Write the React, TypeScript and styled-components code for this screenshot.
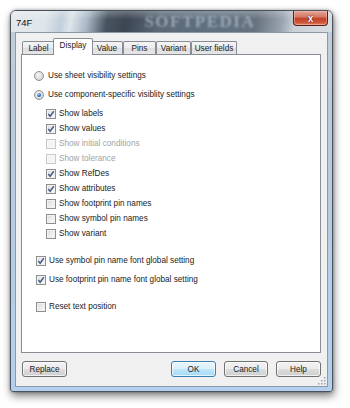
import React from "react";
import styled, { createGlobalStyle, css } from "styled-components";

const Global = createGlobalStyle`
  html, body { margin: 0; padding: 0; background: #ffffff; }
  body { font-family: "Liberation Sans", Arial, sans-serif; font-size: 8.2px; color: #1b1b1b; }
  * { box-sizing: border-box; }
`;

const Page = styled.div`
  width: 350px;
  height: 408px;
  padding: 10px 0 0 10px;
`;

const Window = styled.div`
  width: 323px;
  height: 382px;
  border: 1px solid #4a525c;
  border-radius: 6px 6px 3px 3px;
  background: linear-gradient(180deg, #c3ccd6 0%, #b7cbe0 40%, #b4d0ee 100%);
  box-shadow: 1px 4px 9px rgba(0, 0, 0, 0.5), 0 0 3px rgba(0, 0, 0, 0.35);
  display: flex;
  flex-direction: column;
  overflow: hidden;
`;

const TitleBar = styled.div`
  height: 21px;
  display: flex;
  align-items: center;
  padding-left: 5px;
  background:
    linear-gradient(180deg, rgba(255,255,255,0.25) 0%, rgba(255,255,255,0) 40%),
    linear-gradient(100deg, #e4e8ec 0%, #dfe5ea 11%, #c2cfdc 16%, #dde4ea 19%, #a9b8c7 24%, #48545f 30%, #3b4653 36%, #5b6876 46%, #607080 62%, #66737f 76%, #98a3ae 84%, #c9d0d6 88%, #d9dee3 100%);
`;

const Title = styled.span`
  font-size: 9.5px;
  color: #111;
  margin-top: 1px;
`;

const Watermark = styled.span`
  margin-left: 112px;
  font-family: "Liberation Serif", serif;
  font-weight: bold;
  font-size: 17px;
  letter-spacing: 1.5px;
  color: #a9b5c1;
  filter: blur(1.3px);
  opacity: 0.8;
`;

const CloseButton = styled.div`
  margin-left: auto;
  margin-right: 4px;
  align-self: flex-start;
  width: 35px;
  height: 15px;
  border: 1px solid #5a1f16;
  border-top: none;
  border-radius: 0 0 4px 4px;
  background: linear-gradient(180deg, #e5a598 0%, #d77a66 40%, #c4412a 55%, #cf5a3d 85%, #e1916f 100%);
  box-shadow: inset 0 0 0 1px rgba(255, 200, 190, 0.45);
  display: flex;
  align-items: center;
  justify-content: center;
  color: #fff;
  font-weight: bold;
  font-size: 10px;
  text-shadow: 0 0 1px #3a0f08, 0 0 1px #3a0f08;
`;

const Client = styled.div`
  position: relative;
  margin: 0 4px 4px 4px;
  height: 355px;
  background: #f0f0f0;
  border: 1px solid #8c99a6;
  padding: 5px 6px 0 5px;
  display: flex;
  flex-direction: column;
`;

const TabStrip = styled.div`
  display: flex;
  align-items: flex-start;
  height: 17px;
  margin-bottom: -1px;
  padding-left: 1px;
  position: relative;
  z-index: 1;
`;

const Tab = styled.div<{ $w: number; $active?: boolean }>`
  width: ${(p) => p.$w}px;
  display: flex;
  align-items: center;
  justify-content: center;
  border: 1px solid #898c95;
  border-bottom: none;
  border-radius: 2px 2px 0 0;
  white-space: nowrap;
  ${(p) =>
    p.$active
      ? css`
          height: 17px;
          margin: 0 -2px;
          background: #ffffff;
          position: relative;
          z-index: 2;
          padding-bottom: 3px;
        `
      : css`
          height: 13px;
          margin-top: 3px;
          background: linear-gradient(180deg, #f4f4f4 0%, #ebebeb 50%, #dedede 51%, #e6e6e6 100%);
        `}
`;

const Panel = styled.div`
  height: 299px;
  background: #ffffff;
  border: 1px solid #898c95;
  padding: 13px 0 0 12px;
  display: flex;
  flex-direction: column;
`;

const Row = styled.label<{ $indent?: number; $mt?: number; $disabled?: boolean }>`
  display: flex;
  align-items: center;
  gap: 3px;
  height: 15px;
  margin-left: ${(p) => p.$indent ?? 0}px;
  margin-top: ${(p) => p.$mt ?? 0}px;
  color: ${(p) => (p.$disabled ? "#a3a3a3" : "#1b1b1b")};
  white-space: nowrap;
`;

const RadioCircle = styled.span<{ $on?: boolean }>`
  width: 10px;
  height: 10px;
  border-radius: 50%;
  border: 1px solid #8d8d8d;
  background: radial-gradient(circle at 40% 35%, #f6f6f6 0%, #dcdcdc 60%, #cfcfcf 100%);
  display: flex;
  align-items: center;
  justify-content: center;
  margin-right: 1px;
  &::after {
    content: "";
    display: ${(p) => (p.$on ? "block" : "none")};
    width: 4px;
    height: 4px;
    border-radius: 50%;
    background: radial-gradient(circle at 35% 30%, #9fd0f7 0%, #2b74c5 55%, #164e99 100%);
  }
`;

const CheckBox = styled.span<{ $disabled?: boolean }>`
  width: 10px;
  height: 10px;
  border: 1px solid ${(p) => (p.$disabled ? "#c9c9c9" : "#8e8f8f")};
  background: ${(p) =>
    p.$disabled
      ? "#f4f4f4"
      : "linear-gradient(135deg, #d9d9d9 0%, #ececec 50%, #fbfbfb 100%)"};
  box-shadow: inset 0 0 0 1px ${(p) => (p.$disabled ? "#f7f7f7" : "#f2f2f2")};
  display: flex;
  align-items: center;
  justify-content: center;
`;

const Check = () => (
  <svg width="8" height="8" viewBox="0 0 8 8">
    <path d="M1.3 4.1 L3.1 6.2 L6.8 1.2" fill="none" stroke="#465c8a" strokeWidth="1.5" />
  </svg>
);

const Footer = styled.div`
  display: flex;
  align-items: center;
  margin-top: 8px;
  padding-left: 1px;
`;

const ButtonGroup = styled.div`
  margin-left: auto;
  display: flex;
  gap: 8px;
`;

const Button = styled.div<{ $w: number; $default?: boolean }>`
  width: ${(p) => p.$w}px;
  height: 16px;
  border: 1px solid ${(p) => (p.$default ? "#3c7fb1" : "#707070")};
  border-radius: 3px;
  background: ${(p) =>
    p.$default
      ? "linear-gradient(180deg, #eaf6fd 0%, #d9f0fc 50%, #bee6fd 51%, #a7d9f5 100%)"
      : "linear-gradient(180deg, #f2f2f2 0%, #ebebeb 50%, #dddddd 51%, #cfcfcf 100%)"};
  box-shadow: inset 0 0 0 1px rgba(255, 255, 255, 0.7);
  display: flex;
  align-items: center;
  justify-content: center;
`;

const Grip = styled.svg`
  position: absolute;
  right: 1px;
  bottom: 1px;
`;

type Opt = {
  text: string;
  kind: "radio" | "check";
  on?: boolean;
  disabled?: boolean;
  indent?: number;
  mt?: number;
};

const options: Opt[] = [
  { text: "Use sheet visibility settings", kind: "radio" },
  { text: "Use component-specific visiblity settings", kind: "radio", on: true, mt: 4 },
  { text: "Show labels", kind: "check", on: true, indent: 12, mt: 4 },
  { text: "Show values", kind: "check", on: true, indent: 12 },
  { text: "Show initial conditions", kind: "check", disabled: true, indent: 12 },
  { text: "Show tolerance", kind: "check", disabled: true, indent: 12 },
  { text: "Show RefDes", kind: "check", on: true, indent: 12 },
  { text: "Show attributes", kind: "check", on: true, indent: 12 },
  { text: "Show footprint pin names", kind: "check", indent: 12 },
  { text: "Show symbol pin names", kind: "check", indent: 12 },
  { text: "Show variant", kind: "check", indent: 12 },
  { text: "Use symbol pin name font global setting", kind: "check", on: true, indent: 2, mt: 12 },
  { text: "Use footprint pin name font global setting", kind: "check", on: true, indent: 2, mt: 4 },
  { text: "Reset text position", kind: "check", indent: 2, mt: 12 },
];

const tabs = [
  { label: "Label", w: 33 },
  { label: "Display", w: 40, active: true },
  { label: "Value", w: 32 },
  { label: "Pins", w: 33 },
  { label: "Variant", w: 35 },
  { label: "User fields", w: 46 },
];

export default function App() {
  return (
    <Page>
      <Global />
      <Window>
        <TitleBar>
          <Title>74F</Title>
          <Watermark>SOFTPEDIA</Watermark>
          <CloseButton>x</CloseButton>
        </TitleBar>
        <Client>
          <TabStrip>
            {tabs.map((t) => (
              <Tab key={t.label} $w={t.w} $active={t.active}>
                {t.label}
              </Tab>
            ))}
          </TabStrip>
          <Panel>
            {options.map((o) => (
              <Row key={o.text} $indent={o.indent} $mt={o.mt} $disabled={o.disabled}>
                {o.kind === "radio" ? (
                  <RadioCircle $on={o.on} />
                ) : (
                  <CheckBox $disabled={o.disabled}>{o.on && <Check />}</CheckBox>
                )}
                <span>{o.text}</span>
              </Row>
            ))}
          </Panel>
          <Footer>
            <Button $w={45}>Replace</Button>
            <ButtonGroup>
              <Button $w={45} $default>OK</Button>
              <Button $w={44}>Cancel</Button>
              <Button $w={45}>Help</Button>
            </ButtonGroup>
          </Footer>
          <Grip width="8" height="8" viewBox="0 0 8 8">
            {[
              [6, 0],
              [6, 3],
              [3, 3],
              [6, 6],
              [3, 6],
              [0, 6],
            ].map(([x, y], i) => (
              <rect key={i} x={x} y={y} width="1.5" height="1.5" fill="#9aa3ad" />
            ))}
          </Grip>
        </Client>
      </Window>
    </Page>
  );
}
